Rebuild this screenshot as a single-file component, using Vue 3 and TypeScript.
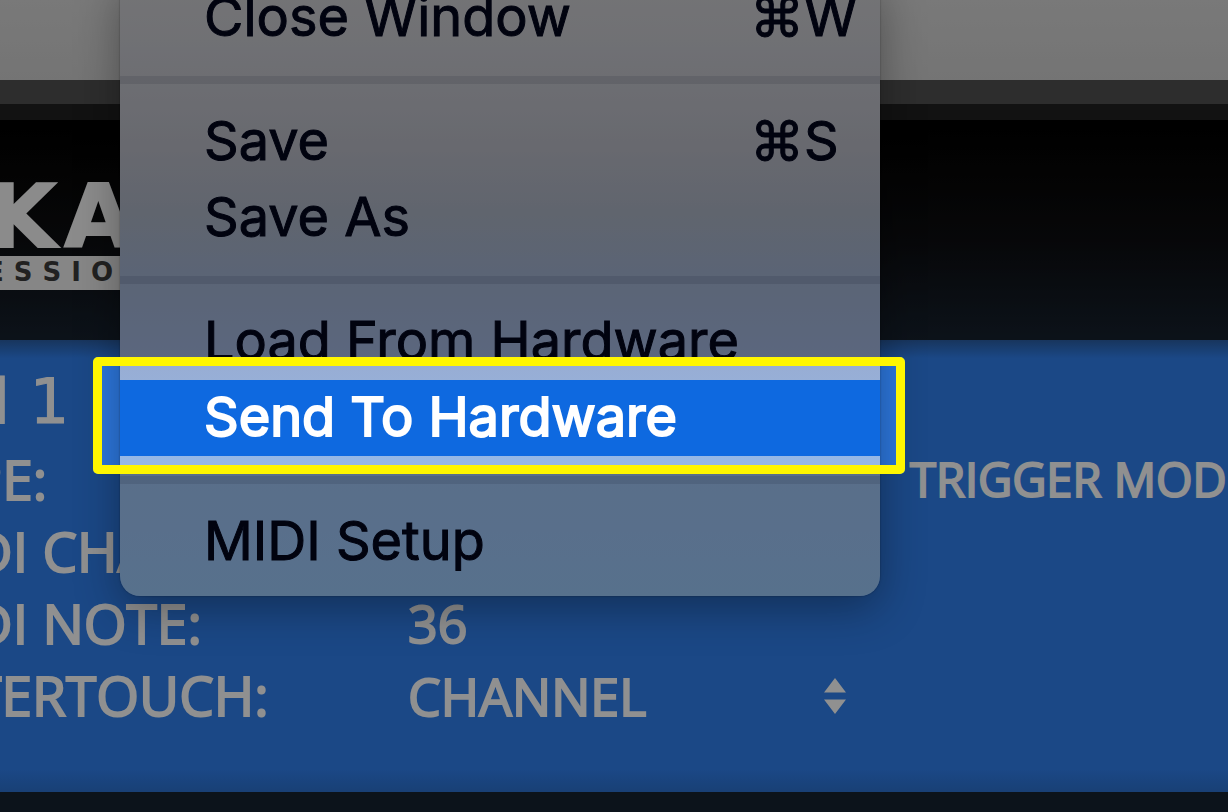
<script setup lang="ts">
import { ref } from 'vue'

interface MenuItem {
  label: string
  keys?: string
  active?: boolean
}

const groups: MenuItem[][] = [
  [{ label: 'Close Window', keys: '⌘W' }],
  [{ label: 'Save', keys: '⌘S' }, { label: 'Save As' }],
  [{ label: 'Load From Hardware' }, { label: 'Send To Hardware', active: true }],
  [{ label: 'MIDI Setup' }],
]

const strip: string[] = ['E', 'S', 'S', 'I', 'O']
const note = ref('36')
const aftertouch = ref('CHANNEL')
</script>

<template>
  <main class="app">
    <div class="titlebar"></div>
    <div class="bezel"></div>
    <div class="edge"></div>
    <header class="hood">
      <div class="brand">
        <div class="brand-name"><span>K</span><span>A</span></div>
        <div class="brand-strip"><span v-for="(c, i) in strip" :key="i">{{ c }}</span></div>
      </div>
    </header>

    <section class="lcd">
      <h1 class="pad">Pad 1</h1>
      <div class="row">
        <span class="name">TYPE:</span>
        <span></span>
        <span class="trigger">TRIGGER MODE:</span>
      </div>
      <div class="row">
        <span class="name">MIDI CHANNEL:</span>
      </div>
      <div class="row">
        <label class="name" for="note">MIDI NOTE:</label>
        <input id="note" v-model="note" class="value" type="text" />
      </div>
      <div class="row">
        <label class="name" for="touch">AFTERTOUCH:</label>
        <div class="picker">
          <select id="touch" v-model="aftertouch" class="value">
            <option>CHANNEL</option>
          </select>
          <svg class="arrows" viewBox="0 0 22 36" aria-hidden="true">
            <path d="M11 0 22 14.500H0ZM0 21.500H22L11 36Z" />
          </svg>
        </div>
      </div>
    </section>

    <nav class="menu" aria-label="File">
      <div v-for="(group, g) in groups" :key="g" class="group">
        <button
          v-for="item in group"
          :key="item.label"
          type="button"
          class="item"
          :class="{ active: item.active }"
        >
          <span class="label">{{ item.label }}</span>
          <span v-if="item.keys" class="keys">{{ item.keys }}</span>
        </button>
      </div>
    </nav>

    <div class="spotlight"></div>
  </main>
</template>

<style>
body {
  margin: 0;
  background: #14212e;
}
</style>

<style scoped>
.app {
  position: relative;
  min-height: 100vh;
  overflow: hidden;
  background: #14212e;
}
.titlebar {
  height: 80px;
  background: linear-gradient(#cacaca, #c2c2c2);
}
.bezel {
  height: 24px;
  background: #4c4c4c;
}
.edge {
  height: 16px;
  background: #1e1e1e;
}
.hood {
  height: 220px;
  overflow: hidden;
  background: linear-gradient(#000 0%, #060606 25%, #0c0d10 55%, #151f2b 100%);
}
.brand {
  width: 120px;
  padding-top: 60px;
  overflow: hidden;
  color: #e8e8e8;
}
.brand-name {
  display: flex;
  gap: 8px;
  height: 76px;
  margin-left: -12px;
  font: bold 88px/74px "DejaVu Sans", sans-serif;
  -webkit-text-stroke: 2px #e8e8e8;
}
.brand-strip {
  display: flex;
  gap: 10px;
  height: 34px;
  margin-left: -18px;
  padding-left: 4px;
  background: #e0e0e0;
  color: #383838;
  font: bold 26px/32px "DejaVu Sans", sans-serif;
}
.lcd {
  box-sizing: border-box;
  height: 452px;
  overflow: hidden;
  background: linear-gradient(#28599c 0, #2d78df 18px, #2d78df 430px, #2a6bc4 100%);
  color: #f0f0f0;
  font-family: "Open Sans", "Noto Sans", sans-serif;
  -webkit-text-stroke: 2px #f0f0f0;
}
.pad {
  height: 103px;
  margin: 0 0 0 -102px;
  font: 400 62px/124px "DejaVu Sans", sans-serif;
  -webkit-text-stroke: 1px #f0f0f0;
}
.row {
  display: grid;
  grid-template-columns: 500px 438px 1fr;
  height: 72px;
  margin-left: -92px;
  font-size: 55px;
  line-height: 72px;
  white-space: nowrap;
}
.trigger {
  padding-left: 64px;
  overflow: hidden;
  font-size: 47px;
}
.picker {
  position: relative;
}
.value {
  box-sizing: border-box;
  width: 100%;
  height: 72px;
  margin: 0;
  padding: 0;
  border: 0;
  outline: 0;
  appearance: none;
  background: transparent;
  color: inherit;
  font: 400 52px/72px "Open Sans", "Noto Sans", sans-serif;
  -webkit-text-stroke: 2px #f0f0f0;
}
.arrows {
  position: absolute;
  top: 19px;
  right: 0;
  width: 22px;
  height: 36px;
  fill: #f0f0f0;
  pointer-events: none;
}
.menu {
  position: absolute;
  top: -20px;
  left: 120px;
  box-sizing: border-box;
  width: 760px;
  padding-bottom: 16px;
  border-radius: 0 0 20px 20px;
  background: linear-gradient(
    #c2c2c4 0,
    #bbbcc2 60px,
    #adafb9 170px,
    #a0a8b8 235px,
    #98a7c3 290px,
    #98abd0 365px,
    #96b8e6 480px,
    #92bcea 100%
  );
  box-shadow: 0 12px 44px rgba(0, 0, 0, 0.34), 0 0 2px rgba(0, 0, 0, 0.4);
}
.group + .group::before {
  content: "";
  display: block;
  height: 8px;
  margin: 20px 0;
  background: rgba(0, 10, 40, 0.1);
}
.item {
  display: flex;
  width: 100%;
  height: 76px;
  padding: 0 0 0 84px;
  border: 0;
  background: transparent;
  color: #02051a;
  font: 400 54px/74px Inter, "Liberation Sans", sans-serif;
  -webkit-text-stroke: 1px #02051a;
  text-align: left;
  white-space: nowrap;
}
.label {
  flex: 1;
}
.keys {
  width: 130px;
}
.active {
  background: #0e69e0;
  color: #fff;
  -webkit-text-stroke: 2px #fff;
}
.spotlight {
  position: absolute;
  top: 357px;
  left: 93px;
  box-sizing: border-box;
  width: 812px;
  height: 117px;
  border: 9px solid #fff600;
  border-radius: 5px;
  box-shadow: 0 0 0 200vmax rgba(0, 0, 0, 0.4);
  pointer-events: none;
}
</style>
